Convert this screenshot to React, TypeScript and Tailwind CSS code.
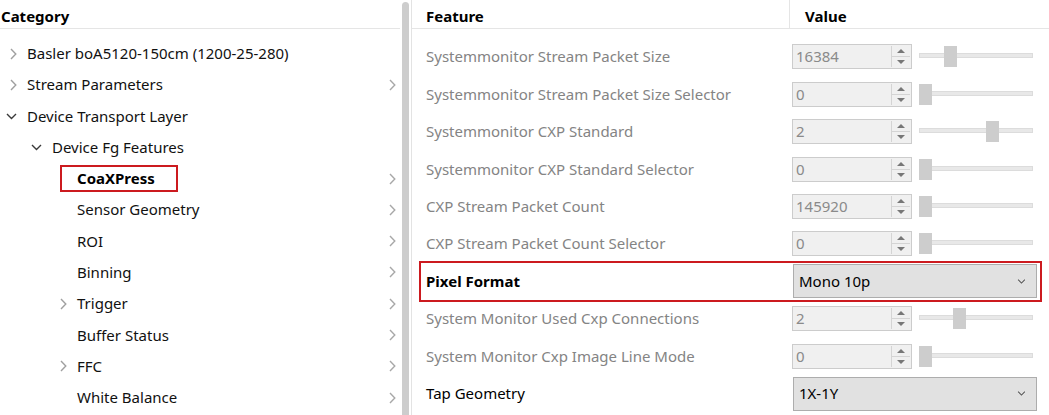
import React from 'react';

const FONT = { fontFamily: '"Noto Sans", "Open Sans", sans-serif' };

type TreeNode = {
  label: string;
  level: number;
  toggle?: 'open' | 'closed';
  more?: boolean;
  boxed?: boolean;
};

const tree: TreeNode[] = [
  { label: 'Basler boA5120-150cm (1200-25-280)', level: 0, toggle: 'closed' },
  { label: 'Stream Parameters', level: 0, toggle: 'closed', more: true },
  { label: 'Device Transport Layer', level: 0, toggle: 'open' },
  { label: 'Device Fg Features', level: 1, toggle: 'open' },
  { label: 'CoaXPress', level: 2, more: true, boxed: true },
  { label: 'Sensor Geometry', level: 2, more: true },
  { label: 'ROI', level: 2, more: true },
  { label: 'Binning', level: 2, more: true },
  { label: 'Trigger', level: 2, toggle: 'closed', more: true },
  { label: 'Buffer Status', level: 2, more: true },
  { label: 'FFC', level: 2, toggle: 'closed', more: true },
  { label: 'White Balance', level: 2, more: true },
];

type Feature =
  | { name: string; kind: 'spin'; value: string; pos: number }
  | { name: string; kind: 'select'; value: string; bold?: boolean; boxed?: boolean };

const features: Feature[] = [
  { name: 'Systemmonitor Stream Packet Size', kind: 'spin', value: '16384', pos: 25 },
  { name: 'Systemmonitor Stream Packet Size Selector', kind: 'spin', value: '0', pos: 0 },
  { name: 'Systemmonitor CXP Standard', kind: 'spin', value: '2', pos: 67 },
  { name: 'Systemmonitor CXP Standard Selector', kind: 'spin', value: '0', pos: 0 },
  { name: 'CXP Stream Packet Count', kind: 'spin', value: '145920', pos: 0 },
  { name: 'CXP Stream Packet Count Selector', kind: 'spin', value: '0', pos: 0 },
  { name: 'Pixel Format', kind: 'select', value: 'Mono 10p', bold: true, boxed: true },
  { name: 'System Monitor Used Cxp Connections', kind: 'spin', value: '2', pos: 34 },
  { name: 'System Monitor Cxp Image Line Mode', kind: 'spin', value: '0', pos: 0 },
  { name: 'Tap Geometry', kind: 'select', value: '1X-1Y' },
];

const ChevronRight = ({ className }: { className?: string }) => (
  <svg width="7" height="12" viewBox="0 0 7 12" className={className}>
    <path d="M1 1 L5.8 6 L1 11" fill="none" stroke="currentColor" strokeWidth="1.4" />
  </svg>
);

const ChevronDown = ({ className }: { className?: string }) => (
  <svg width="11" height="7" viewBox="0 0 11 7" className={className}>
    <path d="M1 1 L5.5 5.5 L10 1" fill="none" stroke="currentColor" strokeWidth="1.4" />
  </svg>
);

const TreeRow = ({ node }: { node: TreeNode }) => (
  <div className="flex h-[31.27px] items-center pr-[4px]" style={{ paddingLeft: node.level * 25 }}>
    <div className="flex w-[27px] shrink-0 items-center justify-center">
      {node.toggle === 'closed' && <ChevronRight className="text-[#a0a0a0]" />}
      {node.toggle === 'open' && <ChevronDown className="-ml-[4px] text-[#3a3a3a]" />}
    </div>
    {node.boxed ? (
      <span className="-ml-[17px] flex h-[27px] w-[118px] items-center border-2 border-[#cc1a1f] pl-[15px] font-bold text-black">
        {node.label}
      </span>
    ) : (
      <span className="text-[#111]">{node.label}</span>
    )}
    <div className="flex-1" />
    {node.more && <ChevronRight className="text-[#a8a8a8]" />}
  </div>
);

const SpinBox = ({ value, pos }: { value: string; pos: number }) => (
  <div className="ml-[2px] flex items-center">
    <div className="relative flex h-[25px] w-[120px] items-center border border-[#cccccc] bg-[#f0f0f0] pl-[3px] text-[#8a8a8a]">
      {value}
      <div className="absolute top-[1px] right-[1px] bottom-[1px] flex w-[19px] flex-col border-l border-[#d4d4d4]">
        <div className="flex flex-1 items-center justify-center border-b border-[#d4d4d4]">
          <div className="h-0 w-0 border-r-[4px] border-b-[4px] border-l-[4px] border-r-transparent border-b-[#777] border-l-transparent" />
        </div>
        <div className="flex flex-1 items-center justify-center">
          <div className="h-0 w-0 border-t-[4px] border-r-[4px] border-l-[4px] border-t-[#777] border-r-transparent border-l-transparent" />
        </div>
      </div>
    </div>
    <div className="relative ml-[7px] h-[21px] w-[114px]">
      <div className="absolute top-[7px] right-0 left-0 h-[5px] border border-[#dcdcdc] bg-[#e8e8e8]" />
      <div className="absolute top-0 h-[21px] w-[13px] bg-[#cdcdcd]" style={{ left: pos }} />
    </div>
  </div>
);

const Select = ({ value }: { value: string }) => (
  <div className="ml-[3px] flex h-[34px] w-[244px] items-center justify-between border border-[#adadad] bg-[#e1e1e1] pr-[9px] pl-[5px] text-black">
    <span>{value}</span>
    <ChevronDown className="scale-75 text-[#555]" />
  </div>
);

const FeatureRow = ({ f }: { f: Feature }) => {
  const active = f.kind === 'select';
  return (
    <div
      className={
        'mx-[9px] flex h-[37.44px] items-center ' +
        (f.kind === 'select' && f.boxed ? 'outline-2 outline-[#cc1a1f]' : '')
      }
    >
      <div
        className={
          'w-[369px] shrink-0 pl-[5px] ' +
          (active ? 'text-black ' : 'text-[#848484] ') +
          (f.kind === 'select' && f.bold ? 'font-bold' : '')
        }
      >
        {f.name}
      </div>
      {f.kind === 'spin' ? <SpinBox value={f.value} pos={f.pos} /> : <Select value={f.value} />}
    </div>
  );
};

export default function App() {
  return (
    <div className="flex h-[415px] w-[1049px] overflow-hidden bg-white text-[15px] leading-none" style={FONT}>
      <div className="w-[400px] shrink-0">
        <div className="flex h-[29px] items-center border-b border-[#e5e5e5] pt-[4px] pl-[1px] font-bold text-black">
          Category
        </div>
        <div className="pt-[9px]">
          {tree.map((n) => (
            <TreeRow key={n.label} node={n} />
          ))}
        </div>
      </div>
      <div className="flex w-[12px] shrink-0 justify-center border-r border-[#e3e3e3] pt-[2px]">
        <div className="h-[440px] w-[7px] rounded-full bg-[#cdcdcd]" />
      </div>
      <div className="flex-1">
        <div className="flex h-[29px] border-b border-[#e5e5e5] font-bold text-black">
          <div className="flex w-[378px] items-center border-r border-[#e5e5e5] pt-[4px] pl-[14px]">Feature</div>
          <div className="flex items-center pt-[4px] pl-[15px]">Value</div>
        </div>
        <div className="pt-[9px]">
          {features.map((f) => (
            <FeatureRow key={f.name} f={f} />
          ))}
        </div>
      </div>
    </div>
  );
}
